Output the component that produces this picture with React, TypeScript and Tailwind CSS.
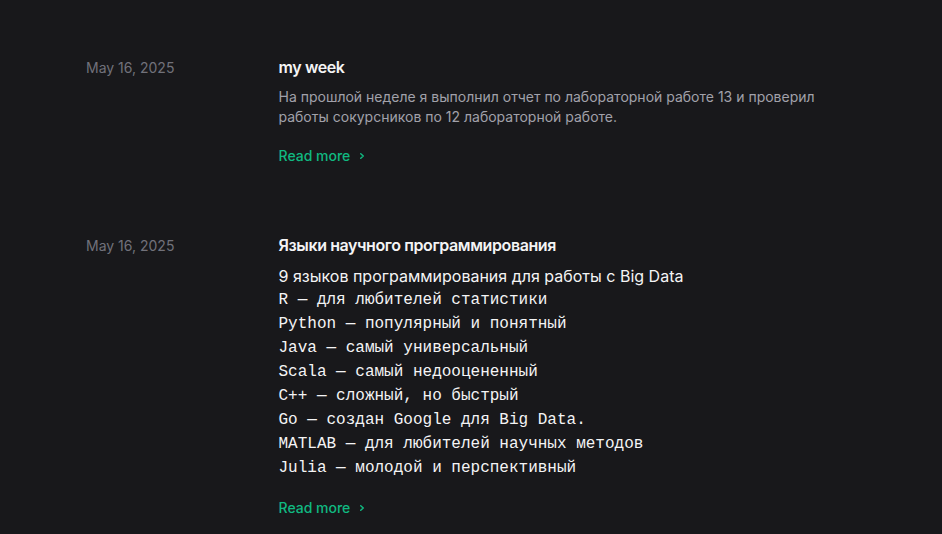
import * as React from "react";

interface IArticle {
  slug: string;
  date: string;
  title: string;
  description?: string;
  lines?: { text: string; mono?: boolean }[];
}

const articles: IArticle[] = [
  {
    slug: "my-week",
    date: "May 16, 2025",
    title: "my week",
    description:
      "На прошлой неделе я выполнил отчет по лабораторной работе 13 и проверил работы сокурсников по 12 лабораторной работе.",
  },
  {
    slug: "big-data-languages",
    date: "May 16, 2025",
    title: "Языки научного программирования",
    lines: [
      { text: "9 языков программирования для работы с Big Data" },
      { text: "R — для любителей статистики", mono: true },
      { text: "Python — популярный и понятный", mono: true },
      { text: "Java — самый универсальный", mono: true },
      { text: "Scala — самый недооцененный", mono: true },
      { text: "C++ — сложный, но быстрый", mono: true },
      { text: "Go — создан Google для Big Data.", mono: true },
      { text: "MATLAB — для любителей научных методов", mono: true },
      { text: "Julia — молодой и перспективный", mono: true },
    ],
  },
];

const ChevronRightIcon = () => (
  <svg viewBox="0 0 16 16" fill="none" aria-hidden="true" className="ml-1 h-4 w-4 stroke-current">
    <path d="M6.75 5.75 9.25 8l-2.5 2.25" strokeWidth="1.5" strokeLinecap="round" strokeLinejoin="round" />
  </svg>
);

const Article = ({ article }: { article: IArticle }) => {
  return (
    <article className="grid grid-cols-4 items-baseline">
      <time className="mt-1 text-sm text-[#71717a]">{article.date}</time>
      <div className="col-span-3 flex flex-col items-start">
        <h2 className="text-base font-semibold tracking-tight text-[#f4f4f5]">{article.title}</h2>
        {article.description && (
          <p className="mt-2 text-sm leading-5 text-[#a1a1aa]">{article.description}</p>
        )}
        {article.lines && (
          <div className="mt-[7px] text-base leading-6 text-[#f4f4f5]">
            {article.lines.map((line) => (
              <p
                key={line.text}
                className={line.mono ? "font-['Liberation_Mono',monospace]" : undefined}
              >
                {line.text}
              </p>
            ))}
          </div>
        )}
        <div
          className={
            article.lines
              ? "mt-[18px] flex items-center text-sm font-medium text-[#10b981]"
              : "mt-[19px] flex items-center text-sm font-medium text-[#10b981]"
          }
        >
          Read more
          <ChevronRightIcon />
        </div>
      </div>
    </article>
  );
};

export default function App() {
  return (
    <div className="min-h-[534px] bg-[#18181b] pt-[54px] font-['Inter',sans-serif] antialiased">
      <div className="mx-auto max-w-[770px] space-y-[66px]">
        {articles.map((article) => (
          <Article key={article.slug} article={article} />
        ))}
      </div>
    </div>
  );
}
